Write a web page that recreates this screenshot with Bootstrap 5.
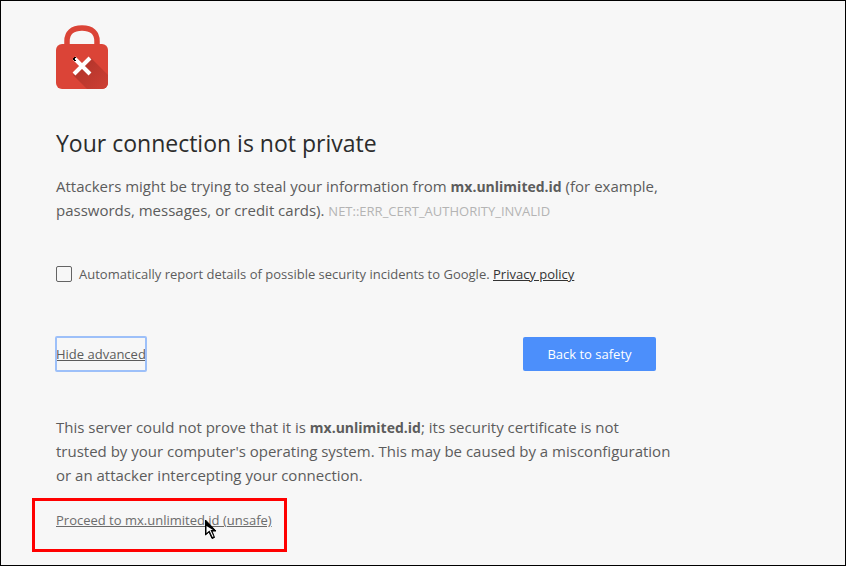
<!DOCTYPE html>
<html lang="en">
<head>
<meta charset="utf-8">
<meta name="viewport" content="width=device-width, initial-scale=1">
<title>Privacy error</title>
<link href="https://cdn.jsdelivr.net/npm/bootstrap@5.3.0/dist/css/bootstrap.min.css" rel="stylesheet">
<style>
body { font-family: "Open Sans", "Noto Sans", sans-serif; font-size: 15px; line-height: 24px; color: #5c5c5c; background: #f7f7f7; border: 1px solid #000; }
.interstitial { max-width: 680px; padding: 24px 0 12px 55px; }
.lock { width: 52px; height: 64px; margin-bottom: 38px; }
h1 { font-size: 23px; line-height: 32px; color: #2c2c2c; font-weight: 400; margin-bottom: 15px; }
strong { font-size: 14px; line-height: 1; }
.text-sm13 { font-size: 13px; }
.error-code { font-size: 13px; line-height: 1; color: #b4b4b4; }
.report { margin-top: 40px; margin-bottom: 51px; gap: 7px; }
.report .form-check-input { width: 16px; height: 16px; margin: 0; border: 1px solid #646464; border-radius: 2px; background-color: #f7f7f7; }
.report a { color: #333; }
.actions { max-width: 600px; }
.btn-details { font-size: 13px; line-height: 18px; color: #5c5c5c; padding: 8px 0; border: 0; border-radius: 1px; outline: 2px solid #9dc0f9; outline-offset: -1px; }
.btn-safety { font-size: 13px; line-height: 18px; color: #fff; background: #4c8ffb; border: 0; border-radius: 2px; padding: 8px 24px; min-width: 133px; }
.details { margin-top: 44px; margin-bottom: 11px; }
.highlight { width: 255px; height: 54px; border: 3px solid #f00; margin-left: -24px; padding: 7px 0 0 21px; }
.highlight a { color: #6c6c6c; }
.pointer { left: 170px; top: 18px; width: 12px; height: 21px; pointer-events: none; }
</style>
</head>
<body class="min-vh-100">
<main class="interstitial">
  <svg class="lock d-block" viewBox="0 0 52 64" aria-hidden="true">
    <defs>
      <linearGradient id="shade" x1="26" y1="40" x2="48" y2="62" gradientUnits="userSpaceOnUse">
        <stop offset="0" stop-color="#b4352b"/><stop offset="1" stop-color="#cb3e33"/>
      </linearGradient>
    </defs>
    <path d="M11 20V16C11 8 16 3 26 3s15 5 15 13v4" fill="none" stroke="#db4437" stroke-width="5.500"/>
    <rect y="19" width="52" height="45" rx="6" fill="#db4437"/>
    <path d="M35 33 52 50V58a6 6 0 0 1-6 6H31L17 50Z" fill="url(#shade)"/>
    <path d="M18 33 34 49M34 33 18 49" stroke="#fff" stroke-width="4"/>
    <path d="M18 32h2v1h-1v2h1v1h-2v-1h-1v-2h1Z" fill="#000"/>
  </svg>
  <h1>Your connection is not private</h1>
  <p class="mb-0">Attackers might be trying to steal your information from <strong>mx.unlimited.id</strong> (for example,<br>passwords, messages, or credit cards). <span class="error-code">NET::ERR_CERT_AUTHORITY_INVALID</span></p>
  <div class="report d-flex align-items-center text-sm13">
    <input class="form-check-input flex-shrink-0" type="checkbox" id="optin">
    <div><label for="optin">Automatically report details of possible security incidents to Google.</label> <a href="#">Privacy policy</a></div>
  </div>
  <div class="actions d-flex justify-content-between align-items-center">
    <button type="button" class="btn btn-details text-decoration-underline">Hide advanced</button>
    <button type="button" class="btn btn-safety">Back to safety</button>
  </div>
  <p class="details">This server could not prove that it is <strong>mx.unlimited.id</strong>; its security certificate is not<br>trusted by your computer's operating system. This may be caused by a misconfiguration<br>or an attacker intercepting your connection.</p>
  <div class="highlight position-relative text-sm13">
    <a href="#">Proceed to mx.unlimited.id (unsafe)</a>
    <svg class="pointer position-absolute" viewBox="0 0 12 21" aria-hidden="true"><path d="M0.500 1V16L4 13 7 19.500 9.500 18.500 7 12H11Z" fill="#000" stroke="#000"/><path d="M1.500 7V14L4.500 11.500 7.500 18 8.500 17.500 5.500 11H8Z" fill="#fff"/></svg>
  </div>
</main>
<script src="https://cdn.jsdelivr.net/npm/bootstrap@5.3.0/dist/js/bootstrap.bundle.min.js"></script>
</body>
</html>
